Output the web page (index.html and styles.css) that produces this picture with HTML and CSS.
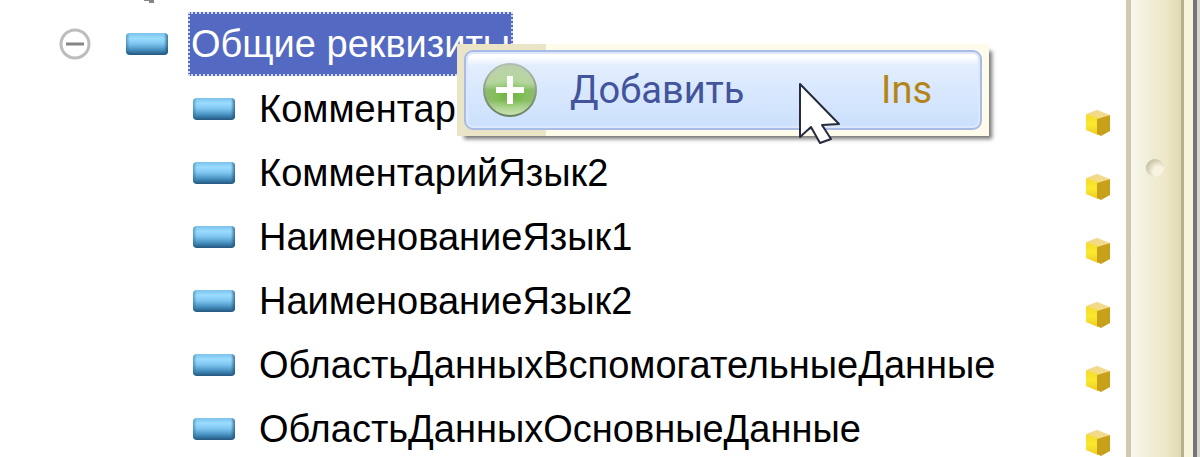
FILE: index.html
```
<!DOCTYPE html>
<html lang="ru">
<head>
  <meta charset="UTF-8">
  <meta name="viewport" content="width=device-width, initial-scale=1.0">
  <title>Общие реквизиты</title>
  <link rel="stylesheet" href="styles.css">
</head>
<body>
  <!-- shared icons -->
  <svg class="sprite" aria-hidden="true">
    <defs>
      <linearGradient id="bar-fill" x1="0" y1="0" x2="0" y2="1">
        <stop offset="0" stop-color="#7cc2ec"/>
        <stop offset="0.25" stop-color="#9adcff"/>
        <stop offset="0.5" stop-color="#7cc4ef"/>
        <stop offset="0.75" stop-color="#4a93c2"/>
        <stop offset="1" stop-color="#22577f"/>
      </linearGradient>
      <linearGradient id="bar-side" x1="0" y1="0" x2="1" y2="0">
        <stop offset="0" stop-color="#1f6496" stop-opacity="0.5"/>
        <stop offset="0.09" stop-color="#1f6496" stop-opacity="0"/>
        <stop offset="0.9" stop-color="#174a70" stop-opacity="0"/>
        <stop offset="1" stop-color="#174a70" stop-opacity="0.7"/>
      </linearGradient>
      <linearGradient id="cube-left" x1="0" y1="0" x2="0" y2="1">
        <stop offset="0" stop-color="#f3dc30"/>
        <stop offset="0.5" stop-color="#fbe92e"/>
        <stop offset="1" stop-color="#eecb24"/>
      </linearGradient>
      <symbol id="bar" viewBox="0 0 42 22">
        <rect width="42" height="22" rx="4" fill="url(#bar-fill)"/>
        <rect width="42" height="22" rx="4" fill="url(#bar-side)"/>
      </symbol>
      <symbol id="cube" viewBox="0 0 26 28">
        <path d="M1 5 L12 1 L25 6 L13 10 Z" fill="#f3d98a"/>
        <path d="M1 5 L13 9 L13 26 L1 21 Z" fill="url(#cube-left)"/>
        <path d="M12 10 L25 6 L25 22 L16 27 L12 25 Z" fill="#c9a01a"/>
      </symbol>
    </defs>
  </svg>

  <main class="window">
    <section class="tree">
      <div class="previous-row">
        <svg width="12" height="4" viewBox="0 0 12 4"><path d="M1 0H11V3H6V1H1Z" fill="#858585"/></svg>
      </div>
      <div class="row root-row">
        <button class="toggle" aria-label="Свернуть">
          <svg width="34" height="34" viewBox="0 0 34 34">
            <circle cx="17" cy="17" r="14" fill="#fff" stroke="#bdbdbd" stroke-width="3"/>
            <path d="M8 17H26" stroke="#858585" stroke-width="3"/>
          </svg>
        </button>
        <svg class="bar"><use href="#bar"/></svg>
        <span class="label selected">Общие реквизиты</span>
      </div>
      <ul class="children">
        <li class="row">
          <svg class="bar"><use href="#bar"/></svg>
          <span class="label">Комментар</span>
          <svg class="cube"><use href="#cube"/></svg>
        </li>
        <li class="row">
          <svg class="bar"><use href="#bar"/></svg>
          <span class="label">КомментарийЯзык2</span>
          <svg class="cube"><use href="#cube"/></svg>
        </li>
        <li class="row">
          <svg class="bar"><use href="#bar"/></svg>
          <span class="label">НаименованиеЯзык1</span>
          <svg class="cube"><use href="#cube"/></svg>
        </li>
        <li class="row">
          <svg class="bar"><use href="#bar"/></svg>
          <span class="label">НаименованиеЯзык2</span>
          <svg class="cube"><use href="#cube"/></svg>
        </li>
        <li class="row">
          <svg class="bar"><use href="#bar"/></svg>
          <span class="label">ОбластьДанныхВспомогательныеДанные</span>
          <svg class="cube"><use href="#cube"/></svg>
        </li>
        <li class="row">
          <svg class="bar"><use href="#bar"/></svg>
          <span class="label">ОбластьДанныхОсновныеДанные</span>
          <svg class="cube"><use href="#cube"/></svg>
        </li>
      </ul>
    </section>

    <div class="scrollbar">
      <div class="thumb"><span class="grip"></span></div>
    </div>
    <div class="window-edge"></div>

    <div class="menu">
      <button class="menu-item">
        <svg class="add-icon" viewBox="0 0 56 56">
          <defs>
            <radialGradient id="add-fill" cx="0.5" cy="0.55" r="0.5">
              <stop offset="0" stop-color="#6cb03f"/>
              <stop offset="0.6" stop-color="#84bf5c"/>
              <stop offset="1" stop-color="#8fba70"/>
            </radialGradient>
            <linearGradient id="add-gloss" x1="0" y1="0" x2="0" y2="1">
              <stop offset="0" stop-color="#c4d4b8" stop-opacity="0.8"/>
              <stop offset="0.35" stop-color="#e2edd6" stop-opacity="0.5"/>
              <stop offset="0.5" stop-color="#fff" stop-opacity="0"/>
              <stop offset="0.7" stop-color="#fff" stop-opacity="0"/>
              <stop offset="1" stop-color="#d9edc0" stop-opacity="0.8"/>
            </linearGradient>
            <linearGradient id="add-ring" x1="0" y1="0" x2="0" y2="1">
              <stop offset="0" stop-color="#b4bdb4"/>
              <stop offset="1" stop-color="#66805c"/>
            </linearGradient>
          </defs>
          <circle cx="28" cy="28" r="26" fill="url(#add-fill)"/>
          <circle cx="28" cy="28" r="26" fill="url(#add-gloss)" stroke="url(#add-ring)" stroke-width="2"/>
          <path d="M28 14V42M14 28H42" stroke="#fff" stroke-width="6"/>
        </svg>
        <span class="menu-text">Добавить</span>
        <span class="shortcut">Ins</span>
      </button>
    </div>

    <svg class="cursor" viewBox="0 0 44 64">
      <path d="M2 2 L2 55 L13 45 L22 61 L33 57 L24 43 L41 42 Z" fill="#fff" stroke="#262b3d" stroke-width="2" stroke-linejoin="round"/>
    </svg>
  </main>
</body>
</html>
```
FILE: styles.css
```
body {
  margin: 0;
  background-color: white;
  color: black;
  font-family: "Liberation Sans", Arial, sans-serif;
}

.sprite {
  position: absolute;
  width: 0;
  height: 0;
}

.window {
  position: relative;
  display: flex;
  height: 100vh;
  overflow: hidden;
}

.tree {
  flex: 1;
  min-width: 0;
}

.previous-row {
  display: flex;
  height: 12px;
  padding-left: 143px;
}

.row {
  display: flex;
  align-items: center;
  height: 64px;
}

.root-row {
  padding-left: 58px;
}

.children {
  list-style: none;
  margin: 0;
  padding: 1px 15px 0 193px;
}

.toggle {
  display: flex;
  padding: 0;
  margin-right: 34px;
  border: none;
  background: none;
}

.bar {
  flex: none;
  width: 42px;
  height: 22px;
}

.label {
  margin-left: 24px;
  font-size: 38px;
  line-height: 60px;
  white-space: nowrap;
}

.selected {
  margin-left: 20px;
  padding: 0 1px;
  border: 2px dotted #d5daf2;
  background-color: #5469c2;
  color: white;
}

.cube {
  flex: none;
  align-self: flex-end;
  width: 26px;
  height: 28px;
  margin: 0 0 4px auto;
}

.scrollbar {
  display: flex;
  width: 50px;
  border-left: 5px solid #cfc9b2;
  border-right: 3px solid #b9b08b;
  background: linear-gradient(to right, #f9f8ee, #f0edd6 40%, #eee8c9 70%, #e0d9b4);
}

.thumb {
  padding: 159px 0 0 15px;
}

.grip {
  display: block;
  width: 18px;
  height: 18px;
  border-radius: 50%;
  background: radial-gradient(circle at 70% 70%, #f7f3df 30%, #c6c0a5 75%);
}

.window-edge {
  width: 9px;
  border-right: 4px solid #77737a;
  background-color: #f8f4dc;
  box-shadow: 3px 0 #d8d5d0;
  margin-right: 3px;
}

.menu {
  position: absolute;
  top: 44px;
  left: 457px;
  padding: 6px 7px;
  background: linear-gradient(to right, #ebe5c8 89px, #fffbea 89px);
  box-shadow: 5px 5px 4px -2px #777;
}

.menu-item {
  display: flex;
  align-items: center;
  width: 518px;
  height: 80px;
  padding: 0 48px 0 16px;
  border: 2px solid #a9bce8;
  border-radius: 9px;
  background: linear-gradient(#fff 6%, #e2eefd 18%, #d9e8fd 50%, #cbe0fd);
  box-shadow: inset 0 0 0 2px #dde8fc;
  color: #43539c;
  font-family: Roboto, sans-serif;
  font-size: 38px;
}

.add-icon {
  width: 56px;
  height: 56px;
}

.menu-text {
  margin-left: 32px;
}

.shortcut {
  margin-left: auto;
  color: #b38518;
}

.cursor {
  position: absolute;
  top: 82px;
  left: 798px;
  width: 44px;
  height: 64px;
}
```
